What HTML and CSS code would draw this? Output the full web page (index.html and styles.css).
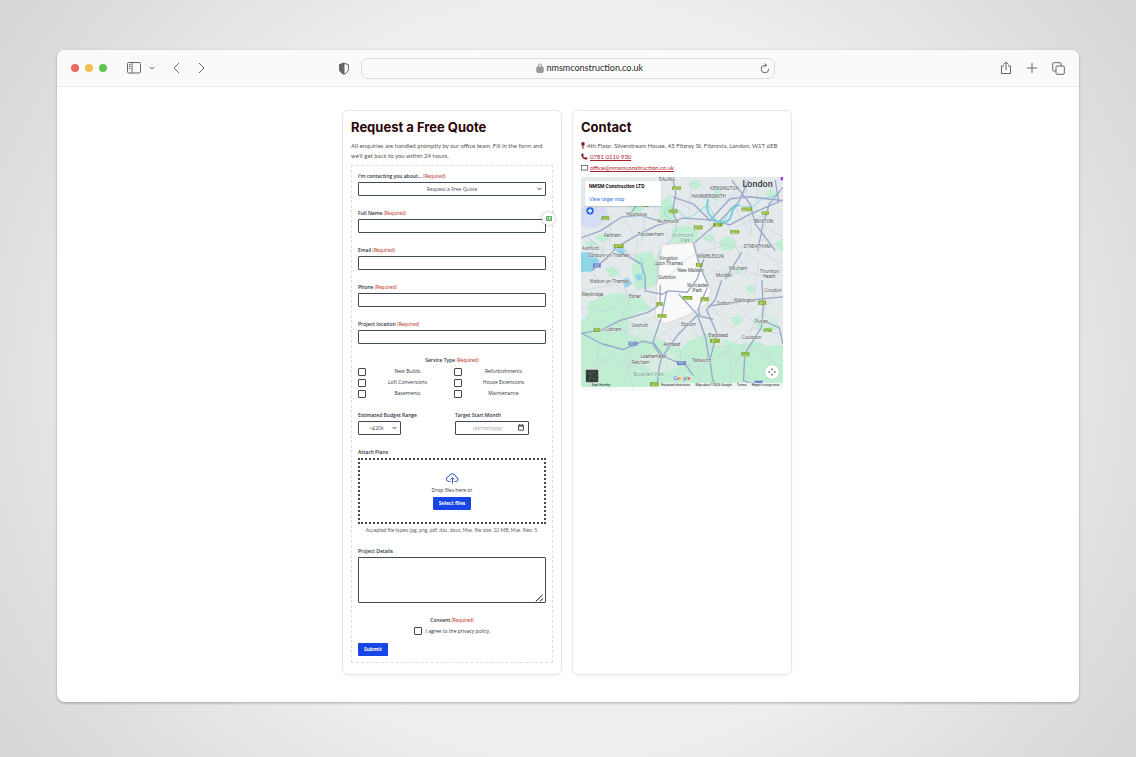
FILE: index.html
```html
<!DOCTYPE html>
<html lang="en">
<head>
<meta charset="utf-8">
<meta name="viewport" content="width=device-width, initial-scale=1">
<title>NMSM Construction – Request a Free Quote</title>
<link rel="stylesheet" href="styles.css">
</head>
<body>
<div class="window">
  <header class="toolbar">
    <div class="tools tools-left">
      <div class="lights"><span class="light red"></span><span class="light amber"></span><span class="light green"></span></div>
      <button class="tool sidebar" type="button" aria-label="Sidebar"><svg width="14" height="12" viewBox="0 0 14 12"><rect x=".5" y=".5" width="13" height="10.500" rx="1.200"/><path d="M5 .5v10.500M2 2.500h1.500M2 4.500h1.500M2 6.500h1.500"/></svg></button>
      <button class="tool caret" type="button" aria-label="Sidebar menu"><svg width="6" height="4" viewBox="0 0 6 4"><path d="M.7.8 3 3 5.300.8"/></svg></button>
      <button class="tool back" type="button" aria-label="Back"><svg width="7" height="12" viewBox="0 0 7 12"><path d="M6 1 1 6l5 5"/></svg></button>
      <button class="tool forward" type="button" aria-label="Forward"><svg width="7" height="12" viewBox="0 0 7 12"><path d="m1 1 5 5-5 5"/></svg></button>
    </div>
    <div class="address-group">
      <button class="tool" type="button" aria-label="Privacy report"><svg width="12" height="13" viewBox="0 0 12 13"><path d="M6 1c-1.500.9-3 1.400-4.500 1.500v4C1.500 9.200 3 11 6 12.200c3-1.200 4.500-3 4.500-5.700v-4C9 2.400 7.500 1.900 6 1z"/><path class="solid" d="M6 1c-1.500.9-3 1.400-4.500 1.500v4C1.500 9.200 3 11 6 12.200z"/></svg></button>
      <div class="address">
        <svg class="lock" width="8" height="10" viewBox="0 0 8 10"><rect class="grey" x=".8" y="4" width="6.400" height="5.500" rx=".8"/><path d="M2.200 4.300V2.800a1.800 1.800 0 0 1 3.600 0v1.500"/></svg>
        <span>nmsmconstruction.co.uk</span>
        <button class="tool reload" type="button" aria-label="Reload"><svg width="10" height="11" viewBox="0 0 10 11"><path d="M8.700 6A3.800 3.800 0 1 1 5 2.200h1.500M4.600.4l2 1.800-2 1.900"/></svg></button>
      </div>
    </div>
    <div class="tools tools-right">
      <button class="tool" type="button" aria-label="Share"><svg width="12" height="14" viewBox="0 0 12 14"><path d="M4 5H1.500v7.500h9V5H8M6 9V1M3.600 3.300 6 1l2.400 2.300"/></svg></button>
      <button class="tool" type="button" aria-label="New tab"><svg width="12" height="12" viewBox="0 0 12 12"><path d="M6 .8v10.400M.8 6h10.400"/></svg></button>
      <button class="tool" type="button" aria-label="Tabs"><svg width="13" height="13" viewBox="0 0 13 13"><rect x="4" y="4" width="8.300" height="8.300" rx="1"/><path d="M4 9H1.700a1 1 0 0 1-1-1V1.700a1 1 0 0 1 1-1H8a1 1 0 0 1 1 1V4"/></svg></button>
    </div>
  </header>

  <main class="page">
    <section class="card">
      <h1>Request a Free Quote</h1>
      <p class="intro">All enquiries are handled promptly by our office team. Fill in the form and we'll get back to you within 24 hours.</p>
      <form class="quote">
        <div class="field">
          <label for="topic">I'm contacting you about… <em>(Required)</em></label>
          <div class="select-box"><select id="topic"><option>Request a Free Quote</option></select><svg class="chev" width="5" height="4" viewBox="0 0 5 4"><path d="m.6.9 1.900 1.900L4.400.9"/></svg></div>
        </div>
        <div class="field">
          <label for="name">Full Name <em>(Required)</em></label>
          <div class="with-badge"><input class="box" id="name" type="text"><span class="badge"><svg width="6" height="5" viewBox="0 0 6 5"><rect width="6" height="5" rx=".6"/><path d="M1.200 1.500h1M3 1.500h1.800M1.200 3.300h1M3 3.300h1.800"/></svg></span></div>
        </div>
        <div class="field"><label for="email">Email <em>(Required)</em></label><input class="box" id="email" type="email"></div>
        <div class="field"><label for="phone">Phone <em>(Required)</em></label><input class="box" id="phone" type="tel"></div>
        <div class="field"><label for="location">Project location <em>(Required)</em></label><input class="box" id="location" type="text"></div>
        <fieldset class="services">
          <legend>Service Type <em>(Required)</em></legend>
          <div class="checks">
            <label><input type="checkbox"><span>New Builds</span></label>
            <label><input type="checkbox"><span>Refurbishments</span></label>
            <label><input type="checkbox"><span>Loft Conversions</span></label>
            <label><input type="checkbox"><span>House Extensions</span></label>
            <label><input type="checkbox"><span>Basements</span></label>
            <label><input type="checkbox"><span>Maintenance</span></label>
          </div>
        </fieldset>
        <div class="pair">
          <div class="field budget">
            <label for="budget">Estimated Budget Range</label>
            <div class="select-box"><select id="budget"><option>&lt;£20k</option></select><svg class="chev" width="5" height="4" viewBox="0 0 5 4"><path d="m.6.9 1.900 1.900L4.400.9"/></svg></div>
          </div>
          <div class="field start">
            <label for="start">Target Start Month</label>
            <div class="select-box"><input class="box" id="start" type="text" placeholder="dd/mm/yyyy"><svg class="cal" width="6" height="7" viewBox="0 0 6 7"><rect x=".5" y="1.200" width="5" height="5" rx=".4"/><path d="M.5 2.200h5M1.700 0v1.200M4.300 0v1.200"/></svg></div>
          </div>
        </div>
        <div class="field">
          <span class="label">Attach Plans</span>
          <div class="drop">
            <svg width="13" height="11" viewBox="0 0 13 11"><path d="M4.500 8.500H3.200a2.500 2.500 0 0 1-.4-5A3.700 3.700 0 0 1 10 3.800a2.400 2.400 0 0 1 0 4.700H8.500M6.500 10.500V4.800M4.700 6.500l1.800-1.800 1.800 1.800"/></svg>
            <span>Drop files here or</span>
            <button class="primary" type="button">Select files</button>
          </div>
          <small>Accepted file types: jpg, png, pdf, doc, docx, Max. file size: 10 MB, Max. files: 5.</small>
        </div>
        <div class="field details">
          <label for="details">Project Details</label>
          <div class="area"><textarea id="details"></textarea><svg class="grip" width="9" height="8" viewBox="0 0 9 8"><path d="M.8 7.400 7.600.8M5 7.400l3-2.900"/></svg></div>
        </div>
        <fieldset class="consent">
          <legend>Consent <em>(Required)</em></legend>
          <label><input type="checkbox"><span>I agree to the privacy policy.</span></label>
        </fieldset>
        <button class="primary submit" type="submit">Submit</button>
      </form>
    </section>

    <section class="card">
      <h2>Contact</h2>
      <address>
        <p><svg width="4" height="7" viewBox="0 0 4 7"><circle cx="2" cy="1.900" r="1.800"/><path d="M1.400 3h1.200L2.400 7h-.8z"/></svg>4th Floor, Silverstream House, 45 Fitzroy St, Fitzrovia, London, W1T 6EB</p>
        <p><svg width="7" height="7" viewBox="0 0 7 7"><path d="M.4 1 1.700.3l1.200 1.700-.8.9c.4.800 1 1.400 1.800 1.800l.9-.7 1.700 1.100-.6 1.400C3.400 7.300-.3 4 .4 1z"/></svg><a href="tel:07810110930">0781 0110 930</a></p>
        <p><svg class="mail" width="7" height="6" viewBox="0 0 7 6"><rect x=".4" y=".5" width="6.200" height="4.600"/></svg><a href="mailto:office@nmsmconstruction.co.uk">office@nmsmconstruction.co.uk</a></p>
      </address>
      <div class="map">
        <svg class="canvas" viewBox="10 10 603 627" role="img" aria-label="Map of south-west London">
          <rect class="land" x="0" y="0" width="630" height="660"/>
          <g class="wood">
            <path d="M10 490 50 455l65-15 40 22 55-12 25 42 50 18 65 35 72-10 55 30 45-40 75-15 56 22v115H10z"/>
            <path d="M280 165l50-12 30 22-6 30-30 10-38-8zM175 240l45-8 22 40-12 65-55 10-14-60zM10 440l50-50 60 5 20 40 75 20 20 92H10zM330 500l60-25 90 35 60-10 73 50v87H250l20-70zM30 385l70-28 80 5 40 40-70 40-120 5zM420 205l25-20 30 18-12 26h-32zM245 85l30-18 22 45-20 37-32-15zM400 60l25-20 10 25-20 20zM50 190l25-12 20 14-22 15zM455 430l26-8 14 20-26 14zM560 55l25-10 12 22-25 10zM80 285l28-8 20 18-24 17zM460 285l22-12 12 15-16 14zM520 440l30-26 40 10 12 38-50 14zM180 180l18-8 10 14-14 9zM150 95l30-8 20 20-30 14zM20 205l24-6 12 14-22 10zM330 30l26-12 14 20-24 12zM372 195l20-16 18 12-16 18zM500 340l22-10 14 16-22 12zM590 205l23-12v40l-18-8z"/>
          </g>
          <g class="pale"><path d="M150 430l40-20 60 20 10 50-50 20-60-20zM310 425l50 5 15 50-45 20-35-40zM180 550l60-20 50 10 10 40-70 20zM395 470l40 10 5 40-40-10zM520 400l40-20 53 22v40l-60 20z"/></g>
          <g class="water">
            <path d="M10 235h35l20 25-18 30-37 4zM110 225l22-7 14 13-18 14zM25 270l20-5 8 20-20 10zM128 318l22-8 14 18-20 13zM170 305l16-7 8 14-14 9z"/>
            <path class="river" d="M205 345c-30-40 5-70-20-95 M232 330c15-20 0-60 10-90 12-25 50-35 52-85 0-30-30-10-35-40 10-28 40-10 55 10 20 22 60-30 75-30 25 20 10 60 40 50 22-8 15-45 40-50 25-3 50 20 75-15 12-18 25 5 60-25"/>
          </g>
          <path class="lilac" d="M10 100h75l8 35-38 28-45-5z"/>
          <path class="zone" d="M252 212 348 206 362 262 375 300 398 345 386 388 330 422 262 448 232 432 236 340 244 270z"/>
          <g class="minor">
            <path d="M10 170l60 60 50-10 60 40M90 170l-20 80 60 60 20 60-60 40-80-10M140 140l40 60-10 60M200 120l-10 90M250 20l-20 90 60 50M340 20l-10 120 60 60 80 20 140-10M380 100l30 120M440 130l60 160 60 20 53-20M500 20l20 160M580 20l-30 200 63 70M270 310l60-60 120-40M380 310l60-60M400 290l100 10M10 410l60 60-20 160M110 440l60 60-30 130M300 450l-80 50-60 20M330 440l60 90-30 100M400 400l60 60 80-70M430 540l90-80 93 20M10 600l80-50 120 40M290 560l70 20 90-50 80 100M600 340l-80 120-70 170M390 20l50 60 70-50M350 60l70 40 90-50M470 160l100-40M10 350l100-20 60 40"/>
            <path d="M30 190l50 40-35 70 60 42M100 120l-5 90 75 35M170 350l-40 80 60 35-45 80 20 90M220 430l-50 30-80 20M260 470l50 60-20 106M370 460l20 60 65-5 5 122M410 420l60-50 50 10M440 350l90 100M480 230l60 30-15 110M520 220l93 50M560 160l53 30M470 100l50 90M360 20l60 70M270 60l70 50M540 30l-10 90 60 30M540 500l40 60-20 77M470 550l60-30 83 60"/>
          </g>
          <g class="major">
            <path d="M10 192l60-22 60-40 60-5 60 18M10 477l60-10 55-28 85-25 35-22 2-60M10 475l60 32 65 18 60-25 30 8 20 32 45 20 30 8 25 35"/>
            <path d="M40 290l50-40 25-30 60-35 60-30 80-22 80 5 60 15 55-30 70-30 33-15M130 235l60 35 12 40v40l50 10 20-10 55 4 30-40 20-60M285 20l8 38-10 55 12 30M285 70l60 20 50 50 60-65 60-6 98 12M510 20l-30 65-60 60-70 60M613 40l-40 50-20 60-15 80M460 20l55 70 15 60 60 80"/>
            <path d="M302 360l55 60 25 70 10 60M345 205l18 68 27 60-30 70 5 22 40 10M430 318l-20 60-25 28 30 70-20 80 8 60 20 30M490 235l-50 80M550 318l4 80-5 60-50 80-4 80 50 16M390 395l150-20 73-7M557 440l45 20 11 50M266 350l-15 75-25 75M223 500l30 40-10 40-5 47M360 420l-60 60-50 70M150 130l60-80M590 20l10 65"/>
          </g>
          <path class="thames" d="M390 75c-12 42 12 70 45 70 35-3 15-45 48-52"/>
          <g class="shield"><path d="M282 38h26v11h-26zM272 107h26v11h-26zM71 127h23v11H71zM194 90h16v9h-16zM108 210h29v12h-29zM347 155h26v12h-26zM404 147h28v11h-28zM456 168h26v11h-26zM489 101h32v11h-32zM549 112h22v11h-22zM353 267h19v11h-19zM314 365h28v12h-28zM367 369h24v12h-24zM235 384h19v11h-19zM238 420h27v11h-27zM48 461h17v12H48zM539 379h24v12h-24zM556 462h23v11h-23zM395 493h29v12h-29zM489 533h24v12h-24zM216 623h25v12h-25z"/></g>
          <g class="motor"><path d="M46 268h23v12H46zM152 502h26v11h-26zM297 559h26v12h-26zM528 618h24v11h-24z"/></g>
          <g class="route"><text x="295" y="48">A406</text><text x="285" y="117">A205</text><text x="83" y="137">A30</text><text x="122" y="220">A316</text><text x="360" y="165">A205</text><text x="418" y="157">A3</text><text x="469" y="178">A24</text><text x="505" y="111">A3036</text><text x="560" y="121">A23</text><text x="362" y="277">A3</text><text x="328" y="376">A240</text><text x="379" y="379">A24</text><text x="245" y="394">A3</text><text x="252" y="430">A243</text><text x="57" y="471">A3</text><text x="551" y="389">A23</text><text x="567" y="472">A22</text><text x="410" y="503">A217</text><text x="501" y="543">A23</text><text x="57" y="278">M3</text><text x="165" y="512">M25</text><text x="310" y="569">M25</text><text x="229" y="633">A24</text></g>
          <g class="places">
            <text class="caps" x="267" y="22">EALING</text><text class="caps" x="438" y="49">KENSINGTON</text><text class="caps" x="391" y="74">HAMMERSMITH</text><text class="caps" x="555" y="146">BRIXTON</text><text class="caps" x="536" y="221">STREATHAM</text><text class="caps" x="396" y="252">WIMBLEDON</text>
            <text x="176" y="125">Hounslow</text><text x="270" y="146">Richmond</text><text x="104" y="188">Feltham</text><text x="218" y="186">Twickenham</text><text class="park" x="314" y="190">Richmond</text><text class="park" x="322" y="205">Park</text><text x="38" y="229">Ashford</text><text x="93" y="250">Sunbury-on-Thames</text><text x="272" y="259">Kingston</text><text x="272" y="273">upon Thames</text><text x="337" y="295">New Malden</text><text x="267" y="315">Surbiton</text><text x="479" y="289">Mitcham</text><text x="437" y="310">Morden</text><text x="572" y="298">Thornton</text><text x="572" y="312">Heath</text><text x="95" y="325">Walton-on-Thames</text><text x="44" y="366">Weybridge</text><text x="171" y="371">Esher</text><text x="358" y="338">Worcester</text><text x="357" y="352">Park</text><text x="583" y="353">Croydon</text><text x="436" y="392">Sutton</text><text x="499" y="384">Wallington</text><text x="549" y="447">Purley</text><text x="185" y="457">Oxshott</text><text x="105" y="471">Cobham</text><text x="331" y="456">Epsom</text><text x="420" y="488">Banstead</text><text x="519" y="494">Coulsdon</text><text x="281" y="515">Ashtead</text><text x="226" y="551">Leatherhead</text><text x="188" y="569">Fetcham</text><text x="370" y="563">Tadworth</text><text class="park" x="212" y="603">Bookham Park</text>
          </g>
          <text class="london" x="537" y="39">London</text>
          <g class="google" ><text x="311" y="617"><tspan class="g-blue">G</tspan><tspan class="g-red">o</tspan><tspan class="g-yellow">o</tspan><tspan class="g-blue">g</tspan><tspan class="g-green">l</tspan><tspan class="g-red">e</tspan></text></g>
          <path class="credit-bg" d="M245 624h368v13H245z"/>
          <g class="credit"><text x="292" y="634">Keyboard shortcuts</text><text x="406" y="634">Map data ©2026 Google</text><text x="490" y="634">Terms</text><text x="561" y="634">Report a map error</text><text x="70" y="634">East Horsley</text></g>
          <circle class="pin" cx="37" cy="111" r="11"/><path class="pin-mark" d="m37 104 7 7-7 7-7-7z"/><circle class="pin" cx="37" cy="111" r="2"/>
          <path class="edge" d="M606 10h7v10h-7z"/>
          <rect class="sat" x="23" y="584" width="40" height="40"/><path class="sat-detail" d="m24 590 14 8 10-6 14 14M27 620l12-12 20 8M40 585l-4 38"/>
        </svg>
        <div class="map-info"><strong>NMSM Construction LTD</strong><a href="#map">View larger map</a></div>
        <button class="pan" type="button" aria-label="Map camera controls"><svg width="8" height="8" viewBox="0 0 8 8"><path d="M4 0l1.300 1.700H2.700zM4 8 2.700 6.300h2.600zM0 4l1.700-1.300v2.600zM8 4 6.300 5.300V2.700z"/></svg></button>
      </div>
    </section>
  </main>
</div>
</body>
</html>
```

FILE: styles.css
```css
* { box-sizing: border-box; }

body {
  margin: 0;
  min-height: 100vh;
  padding: 50px 57px 55px;
  display: flex;
  font-family: "Open Sans", "Noto Sans", sans-serif;
  background: radial-gradient(ellipse 72% 100% at 50% 50%, #f5f5f5 0%, #eeeeee 50%, #dfdfdf 70%, #d6d6d6 86%, #c6c6c6 100%);
}

button, input, select, textarea { font: inherit; margin: 0; }
svg { display: block; flex: none; overflow: visible; }

.window {
  flex: 1;
  display: flex;
  flex-direction: column;
  background: #fff;
  border-radius: 8px;
  box-shadow: 0 1px 3px rgba(0, 0, 0, .3);
}

/* Browser toolbar */
.toolbar {
  display: grid;
  grid-template-columns: 12fr 437px 13fr;
  align-items: center;
  height: 37px;
  padding: 0 14px;
  background: #fafafa;
  border-bottom: 1px solid #ececec;
  border-radius: 8px 8px 0 0;
}
.tools { display: flex; align-items: center; }
.tools-right { justify-content: flex-end; gap: 14px; }
.lights { display: flex; gap: 6px; margin-right: 20px; }
.light { width: 8px; height: 8px; border-radius: 50%; }
.red { background: #ec6a5e; }
.amber { background: #f4bf4f; }
.green { background: #61c554; }
.tool { padding: 0; border: 0; background: none; }
.tool svg, .lock { fill: none; stroke: #666; stroke-width: 1; }
.tool .solid { fill: #666; }
.caret { margin-left: 8px; }
.back { margin-left: 18px; }
.forward { margin-left: 18px; }
.address-group { display: flex; align-items: center; gap: 11px; }
.address {
  flex: 1;
  position: relative;
  display: flex;
  align-items: center;
  justify-content: center;
  gap: 3px;
  height: 21px;
  padding-left: 44px;
  padding-right: 2px;
  border: 1px solid #dcdcdc;
  border-radius: 6px;
  font-family: Lato, sans-serif;
  font-size: 9px;
  line-height: 12px;
  color: #2a2a2a;
}
.lock { stroke: #999; }
.lock .grey { fill: #999; }
.reload { position: absolute; right: 4px; top: 4px; }

/* Page cards */
.page {
  flex: 1;
  display: grid;
  grid-template-columns: 220px 220px;
  justify-content: center;
  gap: 10px;
  padding: 23px 2px 27px 0;
}
.card {
  padding: 8px;
  border: 1px solid #e6e6e6;
  border-radius: 6px;
  background: #fff;
  box-shadow: 0 1px 3px rgba(0, 0, 0, .05);
}
h1, h2 {
  margin: 0;
  font-family: Inter, "Open Sans", sans-serif;
  font-size: 13px;
  line-height: 16px;
  font-weight: 700;
  color: #2b0608;
}
.intro {
  margin: 6px 0 4px;
  padding-right: 8px;
  font-family: Lato, sans-serif;
  font-size: 6px;
  line-height: 10px;
  color: #555;
}

/* Quote form */
.quote {
  display: flex;
  flex-direction: column;
  gap: 11px;
  padding: 4px 6px 6px;
  border: 1px dashed #dedede;
  font-size: 5px;
  line-height: 12px;
  color: #2c3340;
}
.field > label, .quote legend, .label { font-weight: 600; }
em { font-family: Lato, sans-serif; font-style: normal; font-weight: 400; color: #c0432f; }
.field { display: flex; flex-direction: column; }
.box, select {
  display: block;
  width: 100%;
  height: 14px;
  padding: 0 4px;
  border: 1px solid #414856;
  border-radius: 1px;
  background: #fff;
  color: #414856;
}
select { appearance: none; text-align: center; text-align-last: center; }
.select-box, .with-badge, .area { position: relative; }
.chev, .cal, .grip { position: absolute; fill: none; stroke: #414856; pointer-events: none; }
.chev { right: 4px; top: 5px; stroke-width: 1; }
.cal { right: 5px; top: 3px; stroke-width: 1; }
.badge {
  position: absolute;
  right: -9px;
  top: -7px;
  display: grid;
  place-items: center;
  width: 13px;
  height: 13px;
  border-radius: 50%;
  background: #fff;
  box-shadow: 0 0 3px rgba(0, 0, 0, .35);
}
.badge rect { fill: #59ad60; }
.badge path { stroke: #fff; stroke-width: 1; }
fieldset { margin: 0; padding: 0; border: 0; min-width: 0; }
legend { display: block; width: 100%; padding: 0; text-align: center; }
.services legend { line-height: 11px; }
.checks { display: grid; grid-template-columns: 1fr 1fr; gap: 0 4px; line-height: 11px; }
.checks label { display: flex; align-items: center; padding-right: 1px; }
.checks span { flex: 1; text-align: center; }
input[type="checkbox"] {
  appearance: none;
  width: 8px;
  height: 8px;
  border: 1px solid #414856;
  border-radius: 1px;
  background: #fff;
}
.pair { display: grid; grid-template-columns: 1fr 1fr; gap: 4px; margin-top: -1px; }
.budget .select-box { width: 43px; }
.budget select { padding-right: 10px; }
.start .select-box { width: 74px; }
.start .box { text-align: center; padding-right: 13px; }
.start ::placeholder { color: #999; opacity: 1; }
.start { padding-left: 1px; }
.drop {
  display: flex;
  flex-direction: column;
  align-items: center;
  padding: 13px 0 12px;
  border: 2px dotted #414856;
  border-radius: 1px;
}
.drop svg { fill: none; stroke: #3456c8; stroke-width: 1; }
.primary {
  padding: 0 6px;
  border: 0;
  border-radius: 1px;
  background: #1845e5;
  color: #fff;
  font-weight: 700;
  line-height: 13px;
}
.drop .primary { margin-top: 1px; }
small { font-family: Lato, sans-serif; font-size: 5px; line-height: 12px; text-align: center; color: #666; }
.details { margin-top: -2px; }
textarea {
  display: block;
  width: 100%;
  height: 46px;
  border: 1px solid #414856;
  border-radius: 1px;
  resize: none;
}
.grip { right: 2px; bottom: 1px; stroke: #111; stroke-width: 1; }
.consent label {
  display: flex;
  justify-content: center;
  align-items: center;
  gap: 4px;
  line-height: 10px;
}
.submit { align-self: flex-start; margin-top: -4px; }

/* Contact card */
address { margin: 5px 0 4px; font-family: Lato, sans-serif; font-style: normal; font-size: 6px; line-height: 11px; color: #555; }
address p { display: flex; align-items: center; gap: 2px; margin: 0; white-space: nowrap; }
address a { color: #b0202c; }
address svg { fill: #8c1c24; }
address .mail { fill: none; stroke: #777; stroke-width: 1; }
.map { position: relative; padding-bottom: 3px; background: #f7f8fa; }
.canvas { width: 100%; height: auto; overflow: hidden; }
.land { fill: #e4eaeb; }
.wood { fill: #bfeed3; }
.pale { fill: #e3eae9; opacity: .7; }
.water { fill: #8fd4e8; }
.river { fill: none; stroke: #a6dfe6; stroke-width: 4; }
.lilac { fill: #d5dcf3; }
.zone { fill: #f9fbfb; stroke: #eac4c0; stroke-width: 2; }
.minor { fill: none; stroke: #ccd2de; stroke-width: 2; }
.major { fill: none; stroke: #99a8c9; stroke-width: 4; stroke-linejoin: round; }
.thames { fill: none; stroke: #75cfd8; stroke-width: 6; }
.shield { fill: #79a824; }
.motor { fill: #6379cc; }
.route { font-size: 9px; fill: #eef5d8; text-anchor: middle; }
.places { font-family: Roboto, sans-serif; font-size: 14px; fill: #4a5055; text-anchor: middle; stroke: #f6f8f8; stroke-width: 2; paint-order: stroke; }
.places .park { fill: #4f9a78; }
.london { font-family: Roboto, sans-serif; font-size: 27px; font-weight: 500; fill: #30363c; stroke: #f0f4f4; stroke-width: 2; paint-order: stroke; text-anchor: middle; }
.google { font-family: Roboto, sans-serif; font-size: 16px; font-weight: 700; text-anchor: middle; stroke: #fff; stroke-width: 2; paint-order: stroke; }
.g-blue { fill: #4285f4; }
.g-red { fill: #ea4335; }
.g-yellow { fill: #fbbc05; }
.g-green { fill: #34a853; }
.credit-bg { fill: #f4f6f6; opacity: .85; }
.credit { font-family: Roboto, sans-serif; font-size: 10px; fill: #222; text-anchor: middle; }
.pin { fill: #1a62e8; }
.pin-mark { fill: #fff; }
.edge { fill: #a33ce0; }
.sat { fill: #333d38; stroke: #eee; stroke-width: 2; }
.sat-detail { fill: none; stroke: #56635b; stroke-width: 2; }
.map-info {
  position: absolute;
  left: 4px;
  top: 4px;
  display: flex;
  flex-direction: column;
  gap: 4px;
  width: 76px;
  padding: 1px 4px 2px;
  background: #fff;
  font-family: Roboto, sans-serif;
  font-size: 5px;
  line-height: 9px;
  color: #111;
  white-space: nowrap;
  box-shadow: 0 1px 1px rgba(0, 0, 0, .15);
}
.map-info a { color: #2273e0; text-decoration: none; font-family: Lato, sans-serif; }
.pan {
  position: absolute;
  right: 4px;
  bottom: 11px;
  display: grid;
  place-items: center;
  width: 14px;
  height: 14px;
  padding: 0;
  border: 0;
  border-radius: 50%;
  background: #fff;
  box-shadow: 0 0 1px rgba(0, 0, 0, .3);
}
.pan svg { fill: #555; }
```
